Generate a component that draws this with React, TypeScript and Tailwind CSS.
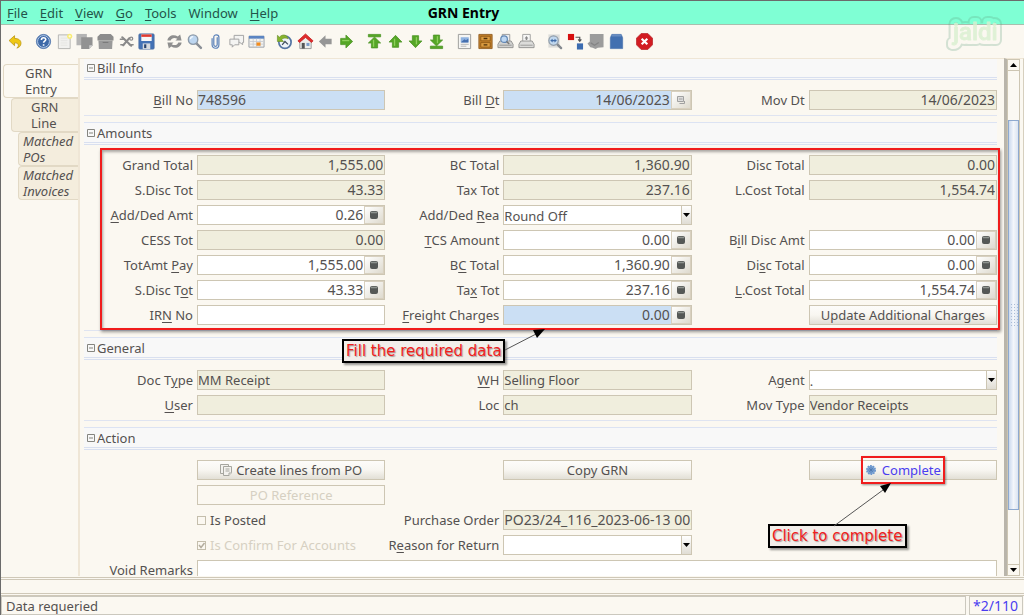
import { useId, useState } from 'react';
import type { ReactNode } from 'react';
import clsx from 'clsx';

const menus = ['&File', '&Edit', '&View', '&Go', '&Tools', 'Window', '&Help'];

const tabs = [
  { lines: ['GRN', 'Entry'], className: 'ml-[2px] pl-[21px] bg-[#fcf9f2]' },
  { lines: ['GRN', 'Line'], className: 'ml-[10px] pl-[19px] bg-[#f4eddd]' },
  { lines: ['Matched', 'POs'], className: 'ml-[17px] pl-1 bg-[#f4eddd] italic' },
  {
    lines: ['Matched', 'Invoices'],
    className: 'ml-[17px] pl-1 bg-[#f4eddd] italic',
  },
];

// Green navigation arrow, optionally with the "first / last" bar
function GreenArrow({ rotate = 0, bar = false }: { rotate?: number; bar?: boolean }) {
  return (
    <g
      transform={`rotate(${rotate} 9 9)`}
      fill="#55a626"
      stroke="#4d9426"
      strokeWidth="0.8"
      strokeLinejoin="round">
      {bar && <path d="M2.5 1.5h13v2.6h-13z" />}
      <path
        d={
          bar
            ? 'M9 4.3 15.5 10.6h-3.2v5.2H5.7v-5.2H2.5z'
            : 'M9 2.5 15.8 9.6h-3.5v5.6H5.7V9.6H2.2z'
        }
      />
      <path
        d={bar ? 'M8 7.2v7.4' : 'M8 6v7.6'}
        stroke="#8ed05c"
        strokeWidth="1.4"
      />
    </g>
  );
}

function Magnifier() {
  return (
    <>
      <path d="m11 11 4.8 4.8" stroke="#8a8f96" strokeWidth="2.6" strokeLinecap="round" />
      <circle cx="7.5" cy="7" r="5" fill="#bdd6f0" stroke="#8d9aa8" strokeWidth="1.5" />
      <path d="M4.6 6.5a3 3 0 0 1 3-2.6" stroke="#f3f9ff" strokeWidth="1.4" fill="none" />
    </>
  );
}

const toolGroups: { width: string; tools: { name: string; icon: ReactNode }[] }[] = [
  {
    width: 'w-[21px]',
    tools: [
      {
        name: 'Undo',
        icon: (
          <path
            d="M2.2 8 8 2.8v3c4.6 0 7 2.2 6.8 5.4-.2 2.6-2 4.2-4.4 4.8 1.3-1.2 1.9-2.3 1.5-3.6-.4-1.4-1.7-2-3.9-2v3z"
            fill="#efc814"
            stroke="#b8940c"
            strokeWidth="0.8"
            strokeLinejoin="round"
          />
        ),
      },
    ],
  },
  {
    width: 'w-[124px]',
    tools: [
      {
        name: 'Help',
        icon: (
          <>
            <circle cx="9" cy="9" r="7.5" fill="#3d69a8" stroke="#5a7db0" />
            <circle cx="9" cy="9" r="6.3" fill="none" stroke="#b9cde8" strokeWidth="1" />
            <path
              d="M6.8 7.3c0-3 4.6-2.9 4.6-.3 0 1.5-2.3 1.6-2.3 3.3M9.1 12v1.5"
              fill="none"
              stroke="#fff"
              strokeWidth="1.7"
            />
          </>
        ),
      },
      {
        name: 'New record',
        icon: (
          <>
            <path d="M2.5 2H15v14.5H2.5z" fill="#f1f1ef" stroke="#b5b5b2" />
            <path d="M5 5.5h7M5 8h7M5 10.5h7M5 13h7" stroke="#e6e5e2" />
            <circle cx="14.5" cy="3.5" r="2.7" fill="#f8ec74" />
            <circle cx="14.5" cy="3.5" r="1.2" fill="#fffce0" />
          </>
        ),
      },
      {
        name: 'Copy record',
        icon: (
          <>
            <path d="M.5 1h11v12H.5z" fill="#b4b4b4" />
            <path d="M5.5 4.5h12V13L14 17H5.5z" fill="#929292" />
            <path d="M14 17v-4h3.5z" fill="#cfcfcf" />
          </>
        ),
      },
      {
        name: 'Delete record',
        icon: (
          <>
            <path d="M3.5 1h11l3 3v4H.5V4z" fill="#8c8c8c" />
            <path d="M1.5 8h15l-.5 9H2z" fill="#9a9a9a" />
            <path d="M6 10h6" stroke="#777" />
          </>
        ),
      },
      {
        name: 'Delete selection',
        icon: (
          <g stroke="#8a8a8a" fill="none" strokeLinecap="round">
            <path d="m4.500 4.500 9.500 9M12 5.500 5.500 13" strokeWidth="2.2" />
            <circle cx="14" cy="6" r="1.6" strokeWidth="1.3" />
            <path d="M2.5 6.500h4.500M12 12.500h4M3 12.500h3" strokeWidth="1.6" />
          </g>
        ),
      },
      {
        name: 'Save',
        icon: (
          <>
            <rect x="1" y="1" width="16" height="16" rx="1" fill="#4372b5" stroke="#4a6fa5" />
            <path d="M3.5 1.500h11v7h-11z" fill="#f6f6f6" />
            <path d="M3.5 1.500h11v2.600h-11z" fill="#e23a2e" />
            <path d="M5 11h8v6H5z" fill="#d5d9de" />
            <path d="M6.5 12h2.300v4H6.500z" fill="#26436f" />
          </>
        ),
      },
    ],
  },
  {
    width: 'w-[103px]',
    tools: [
      {
        name: 'Refresh',
        icon: (
          <g fill="#8f8f8f">
            <path d="M1.5 8C2 3 8 .8 12.5 3.8L15 1.5 16.5 8H10l2-1.8C9 4.2 5.7 5.4 5 8z" />
            <path d="M16.5 10c-.5 5-6.5 7.2-11 4.2L3 16.5 1.5 10H8l-2 1.8c3 2 6.3.8 7-1.8z" />
          </g>
        ),
      },
      { name: 'Find', icon: <Magnifier /> },
      {
        name: 'Attachment',
        icon: (
          <path
            d="M10.8 5v7.2c0 2.6-3.6 2.6-3.6 0V4.2c0-3 5.4-3 5.4.2v8c0 5-7.2 5-7.2 0V6"
            fill="none"
            stroke="#5c83ba"
            strokeWidth="1.3"
            strokeLinecap="round"
          />
        ),
      },
      {
        name: 'Chat',
        icon: (
          <g fill="#f4f4f2" stroke="#a0a0a0" strokeLinejoin="round">
            <path d="M6.5 2.500h10v7.500h-1v2.300L12.500 10h-6z" />
            <path d="M2 6.500h9.500v6H7L4.500 15v-2.500H2z" />
          </g>
        ),
      },
      {
        name: 'Grid toggle',
        icon: (
          <>
            <path d="M1 3.500h16v11.500H1z" fill="#f3f3f0" stroke="#9a9fa8" />
            <path d="M1 3h16v3H1z" fill="#5b85c2" />
            <path d="M2 9h14M2 11.800h14M5.500 6v8.500M9 6v8.500M12.800 6v8.500" stroke="#c3c6cc" strokeWidth="0.8" />
            <path d="M9 10h4.200v3.500H9z" fill="#f28c1e" />
          </>
        ),
      },
    ],
  },
  {
    width: 'w-[83px]',
    tools: [
      {
        name: 'History',
        icon: (
          <>
            <circle cx="9.500" cy="9.800" r="6.500" fill="#eef3f8" stroke="#5575a3" strokeWidth="1.8" />
            <path d="m6.500 12.500 3-3.500 3.200 3" fill="none" stroke="#3f4d5e" strokeWidth="1.3" />
            <path d="M1.500 2.500v6.500h6.500L5.900 6.800c2-1.700 4.600-2 7-.6C12 2 7 .5 3.700 4.400z" fill="#87b52c" stroke="#6a8f2a" strokeWidth="0.7" />
          </>
        ),
      },
      {
        name: 'Home',
        icon: (
          <>
            <path d="M3 8.500 9 4l6 4.500v8H3z" fill="#eeeeec" stroke="#999" />
            <path d="M5 10.500h3.200v6H5z" fill="#555" />
            <path d="M10 10.500h3.200v3.200H10z" fill="#7b9cc9" />
            <path d="M9 1 1 8.300l1.600 1.700L9 4.700l6.400 5.300L17 8.300z" fill="#e22b2b" stroke="#c42a2a" strokeWidth="0.9" />
          </>
        ),
      },
      {
        name: 'Parent record',
        icon: <path d="m2 9 7-6.500v3.600h6.500v5.800H9v3.600z" fill="#969696" />,
      },
      { name: 'Detail record', icon: <GreenArrow rotate={90} /> },
    ],
  },
  {
    width: 'w-[83px]',
    tools: [
      { name: 'First record', icon: <GreenArrow bar /> },
      { name: 'Previous record', icon: <GreenArrow /> },
      { name: 'Next record', icon: <GreenArrow rotate={180} /> },
      { name: 'Last record', icon: <GreenArrow rotate={180} bar /> },
    ],
  },
  {
    width: 'w-[83px]',
    tools: [
      {
        name: 'Report',
        icon: (
          <>
            <path d="M2.500 1.500h13v15h-13z" fill="#f5f5f3" stroke="#9b9b99" />
            <path d="M5 4.500h8.500V10H5z" fill="#8eb2e0" />
            <path d="M5.500 9.500 9 6.500l1.500 1.200 2.500-1.500v3.800H5.500z" fill="#456fae" />
            <path d="M5 12h8.500M5 14h6" stroke="#b5b5b5" />
          </>
        ),
      },
      {
        name: 'Archive',
        icon: (
          <>
            <path d="M2 1.500h14v15H2z" fill="#c17f28" stroke="#96642a" />
            <path d="M4 3.500h10v4.800H4zM4 10.200h10V15H4z" fill="#db9c40" stroke="#885313" strokeWidth="0.8" />
            <path d="M7 5.800h4M7 12.500h4" stroke="#4d2f08" strokeWidth="1.4" />
          </>
        ),
      },
      {
        name: 'Print preview',
        icon: (
          <>
            <path d="M5.500 1.500h8v7.500h-8z" fill="#eceef2" stroke="#9b9b99" />
            <path d="M3 8.500h12l2 3.500v3.500H1V12z" fill="#d2d2d0" stroke="#949492" />
            <path d="M2.500 13h13" stroke="#a9a9a7" strokeWidth="1.5" />
            <circle cx="7.500" cy="6.500" r="3.500" fill="#bfd8f3" stroke="#6489b5" strokeWidth="1.3" />
            <path d="m10 9 3 2.500" stroke="#777" strokeWidth="1.5" />
          </>
        ),
      },
      {
        name: 'Print',
        icon: (
          <>
            <path d="M5 1.500h8v8H5z" fill="#f7f7f6" stroke="#a0a09e" />
            <path d="m9 3.300 2 2.500H9.800V7.500H8.200V5.800H7z" fill="#888" />
            <path d="M3 8.500h12l2 3.500v3.500H1V12z" fill="#dcdcda" stroke="#949492" />
            <path d="M2.500 13h13" stroke="#b0b0ae" strokeWidth="1.5" />
          </>
        ),
      },
    ],
  },
  {
    width: 'w-[83px]',
    tools: [
      {
        name: 'Zoom across',
        icon: (
          <>
            <path d="M2.500 1.500h12v14h-12z" fill="#dcdcda" />
            <path d="m11.500 11.500 4.500 4.500" stroke="#84898f" strokeWidth="2.5" strokeLinecap="round" />
            <circle cx="8" cy="8" r="5" fill="#c0d7ee" stroke="#919da9" strokeWidth="1.3" />
            <path d="M4.500 8 7 6v1.300h2V6l2.500 2L9 10V8.700H7V10z" fill="#406ca8" />
          </>
        ),
      },
      {
        name: 'Workflow',
        icon: (
          <>
            <path d="M1 1h6.500v6.500H1z" fill="#d60f0f" />
            <path d="M10.500 11H17v6.500h-6.500z" fill="#3c6cb0" />
            <path d="M9 4.500h4.500v3.500M11.800 6.800l1.700 2 1.700-2" fill="none" stroke="#555" strokeWidth="1.3" />
          </>
        ),
      },
      {
        name: 'Requests',
        icon: (
          <>
            <path d="M3 1h14.500v14l-6 .5L9 17l-3-1.500-2.500-.5L.5 11 3 9z" fill="#9c9c9c" />
            <path d="M4 10.500 8 13l4.500-3" fill="none" stroke="#858585" strokeWidth="1.4" />
          </>
        ),
      },
      {
        name: 'Product info',
        icon: (
          <>
            <path d="M4 1.500h10L15.500 5v11.500h-13V5z" fill="#4270b0" stroke="#4e77b0" strokeWidth="0.8" />
            <path d="M4 3h10" stroke="#7f9fcc" />
          </>
        ),
      },
    ],
  },
  {
    width: 'w-[21px]',
    tools: [
      {
        name: 'Exit',
        icon: (
          <>
            <path d="M5.500.5h7l5 5v7l-5 5h-7l-5-5v-7z" fill="#d21c22" stroke="#b9292d" strokeWidth="0.8" />
            <path d="m6 6 6 6M12 6l-6 6" stroke="#fff" strokeWidth="2.3" />
          </>
        ),
      },
    ],
  },
];

// "&" marks the access key, the letter after it is underlined
function Mnemonic({ text }: { text: string }) {
  const at = text.indexOf('&');
  if (at < 0) return <>{text}</>;
  return (
    <>
      {text.slice(0, at)}
      <u className="underline-offset-2">{text[at + 1]}</u>
      {text.slice(at + 2)}
    </>
  );
}

function FieldLabel({ id, text }: { id: string; text: string }) {
  return (
    <label htmlFor={id} className="pr-1 text-right leading-5 whitespace-nowrap">
      <Mnemonic text={text} />
    </label>
  );
}

type FieldProps = {
  label: string;
  value?: string;
  tone?: 'locked' | 'editable' | 'required';
  align?: 'left' | 'right';
  tool?: 'calculator' | 'calendar';
  className?: string;
  children?: ReactNode;
};

const tones = {
  locked: 'bg-[#f0eedd]',
  editable: 'bg-white',
  required: 'bg-[#cbdff4]',
};

function Field({
  label,
  value = '',
  tone = 'locked',
  align = 'left',
  tool,
  className,
  children,
}: FieldProps) {
  const id = useId();
  return (
    <>
      <FieldLabel id={id} text={label} />
      <div
        className={clsx(
          'relative flex h-5 min-w-0 border border-[#cdc6b3]',
          tones[tone],
          className,
        )}>
        <input
          id={id}
          defaultValue={value}
          readOnly={tone === 'locked'}
          className={clsx(
            'w-full min-w-0 flex-1 outline-none',
            align === 'right' && 'pr-px text-right',
            /\d/.test(value) && 'text-sm',
          )}
        />
        {tool && (
          <button
            aria-label={`Open ${tool}`}
            className="flex w-5 shrink-0 items-center justify-center border border-[#d8d0bf] bg-linear-to-br from-white to-[#dedace]">
            <svg viewBox="0 0 10 10" className="size-2.5">
              {tool === 'calculator' ? (
                <>
                  <rect x="1" y="1" width="8" height="8" rx="2" fill="#555856" />
                  <path d="M2 2.500h6" stroke="#8f9490" strokeWidth="1.5" />
                </>
              ) : (
                <>
                  <path d="M1.500 1.500h6v5h-6z" fill="#ddd" stroke="#a0a0a0" />
                  <path d="M3 4h3.500M3.500 8.500h5V6" fill="none" stroke="#a0a0a0" />
                </>
              )}
            </svg>
          </button>
        )}
        {children}
      </div>
    </>
  );
}

function Dropdown({ label, value }: { label: string; value: string }) {
  const id = useId();
  return (
    <>
      <FieldLabel id={id} text={label} />
      <div className="relative flex h-5 min-w-0 border border-[#cdc6b3] bg-white">
        <select
          id={id}
          defaultValue={value}
          className="w-full min-w-0 appearance-none outline-none">
          <option>{value}</option>
        </select>
        <span className="pointer-events-none flex w-2.5 shrink-0 items-center justify-center border-l border-[#cdc6b3] bg-linear-to-b from-white to-[#e0ddd4]">
          <svg viewBox="0 0 7 4" className="h-1 w-[7px] shrink-0">
            <path d="M0 0h7L3.500 4z" fill="#000" />
          </svg>
        </span>
      </div>
    </>
  );
}

function ActionButton({
  children,
  disabled,
  className,
}: {
  children: ReactNode;
  disabled?: boolean;
  className?: string;
}) {
  return (
    <button
      disabled={disabled}
      className={clsx(
        'flex h-5 w-full items-center justify-center gap-1 border border-[#cdc6b3] whitespace-nowrap',
        disabled
          ? 'text-[#d6d0c2]'
          : 'bg-linear-to-b from-[#fdfcfa] via-[#f8f6f1] to-[#e2dfd6]',
        className,
      )}>
      {children}
    </button>
  );
}

function Check({
  label,
  checked = false,
  disabled = false,
}: {
  label: string;
  checked?: boolean;
  disabled?: boolean;
}) {
  return (
    <label
      className={clsx(
        'flex h-5 items-center gap-1 whitespace-nowrap',
        disabled && 'text-[#d6d0c2]',
      )}>
      <span className="relative flex">
        <input
          type="checkbox"
          defaultChecked={checked}
          disabled={disabled}
          className="peer size-[9px] appearance-none border border-[#c4beac]"
        />
        <svg
          viewBox="0 0 9 9"
          className="pointer-events-none absolute inset-0 hidden size-[9px] peer-checked:block">
          <path d="m2 4 2 2.500L7.500 2" fill="none" stroke="#b3ad9e" strokeWidth="1.5" />
        </svg>
      </span>
      {label}
    </label>
  );
}

function Section({
  title,
  first,
  children,
}: {
  title: string;
  first?: boolean;
  children: ReactNode;
}) {
  const [open, setOpen] = useState(true);
  return (
    <section className="mb-1.5 border-b border-[#dfe4f1]">
      <h2
        className={clsx(
          'border-b-3 border-double border-b-[#d9e0f0] bg-[#f8f8f8]',
          first ? 'h-[21px]' : 'h-[23px] border-t border-t-[#dce3f3]',
        )}>
        <button
          onClick={() => setOpen(!open)}
          className="flex h-full items-center gap-[2px] pl-[3px]">
          <svg viewBox="0 0 8 8" className="size-2">
            <path
              d={open ? 'M.5.5h7v7h-7zM2 4h4' : 'M.5.5h7v7h-7zM2 4h4M4 2v4'}
              fill="none"
              stroke="#85857f"
            />
          </svg>
          {title}
        </button>
      </h2>
      {open && (
        <div className="relative grid grid-cols-[113px_1fr_118px_1fr_117px_1fr] gap-y-[5px] pt-2.5 pb-[5px]">
          {children}
        </div>
      )}
    </section>
  );
}

function Callout({ children, className }: { children: ReactNode; className: string }) {
  return (
    <div
      className={clsx(
        "absolute z-10 flex h-6 items-center justify-center border-2 border-black bg-[#f2eeea] [font-family:'DejaVu_Sans',sans-serif] text-[15px] whitespace-nowrap text-[#f0201c] shadow-[2px_2px_2px_#0006] text-shadow-[1px_1px_1px_#0005]",
        className,
      )}>
      {children}
    </div>
  );
}

function Logo() {
  const text = {
    x: 7,
    y: 26,
    fontFamily: 'Roboto, sans-serif',
    fontSize: 24,
    fontWeight: 500,
    strokeLinejoin: 'round' as const,
  };
  return (
    <svg
      viewBox="0 0 60 40"
      role="img"
      aria-label="jaldi"
      className="pointer-events-none absolute top-[13px] right-[18px] z-20 h-10 w-[60px]">
      <mask id="logo-ring">
        <text {...text} fill="#fff" stroke="#fff" strokeWidth="12">
          jaldi
        </text>
        <text {...text} fill="#000" stroke="#000" strokeWidth="8">
          jaldi
        </text>
      </mask>
      <path d="M0 0h60v40H0z" fill="#5f9f7c" opacity="0.25" mask="url(#logo-ring)" />
      <text {...text} fill="#d9f0d0" stroke="#d9f0d0" strokeWidth="0.8" opacity="0.8">
        jaldi
      </text>
    </svg>
  );
}

export default function App() {
  return (
    <div className="relative flex h-screen flex-col overflow-hidden border-t border-l border-[#6b6b6b] bg-[#fbf8f1] [font-family:'Noto_Sans',sans-serif] text-[13px] leading-5 text-[#545150]">
      <Logo />

      {/* Menu bar */}
      <header className="relative flex h-6 shrink-0 items-center border-b border-[#a9bfae] bg-[#7fffd4] pl-1.5">
        <nav className="flex gap-3 text-[#24544a]">
          {menus.map((menu) => (
            <button key={menu}>
              <Mnemonic text={menu} />
            </button>
          ))}
        </nav>
        <h1 className="pointer-events-none absolute inset-x-0 pr-[98px] text-center text-sm font-bold text-black">
          GRN Entry
        </h1>
      </header>

      {/* Toolbar */}
      <div className="flex h-[33px] shrink-0 items-center gap-[7px] pl-1">
        {toolGroups.map((group, index) => (
          <div key={index} className={clsx('flex', group.width)}>
            {group.tools.map((tool) => (
              <button
                key={tool.name}
                aria-label={tool.name}
                className="flex flex-1 items-center justify-center">
                <svg viewBox="0 0 18 18" fill="none" className="size-[17px] shrink-0">
                  {tool.icon}
                </svg>
              </button>
            ))}
          </div>
        ))}
      </div>

      <div className="flex min-h-0 flex-1">
        {/* Tabs */}
        <div className="flex w-[77px] shrink-0 flex-col pt-1.5">
          {tabs.map((tab) => (
            <button
              key={tab.lines.join(' ')}
              className={clsx(
                'flex flex-col rounded-l-sm border border-r-0 border-[#e2d9c5] text-left leading-4',
                tab.className,
              )}>
              {tab.lines.map((line) => (
                <span key={line} className="h-4">
                  {line}
                </span>
              ))}
            </button>
          ))}
        </div>

        {/* Form */}
        <main className="min-w-0 flex-1 overflow-hidden border-t border-l-2 border-[#efe6d6] pr-[7px] pl-1">
          <Section title="Bill Info" first>
            <Field label="&Bill No" value="748596" tone="required" />
            <Field label="Bill &Dt" value="14/06/2023" tone="required" align="right" tool="calendar" />
            <Field label="Mov Dt" value="14/06/2023" align="right" />
          </Section>

          <Section title="Amounts">
            <div className="pointer-events-none absolute top-[3px] right-[-3px] bottom-0 left-4 z-10 border-2 border-[#f01c1c] shadow-[1px_2px_3px_#0006,inset_1px_2px_3px_#0005]" />
            <Field label="Grand Total" value="1,555.00" align="right" />
            <Field label="BC Total" value="1,360.90" align="right" />
            <Field label="Disc Total" value="0.00" align="right" />

            <Field label="S.Disc Tot" value="43.33" align="right" />
            <Field label="Tax Tot" value="237.16" align="right" />
            <Field label="L.Cost Total" value="1,554.74" align="right" />

            <Field label="&Add/Ded Amt" value="0.26" tone="editable" align="right" tool="calculator" />
            <Dropdown label="Add/Ded &Rea" value="Round Off" />
            <span className="col-span-2" />

            <Field label="CESS Tot" value="0.00" align="right" />
            <Field label="&TCS Amount" value="0.00" tone="editable" align="right" tool="calculator" />
            <Field label="B&ill Disc Amt" value="0.00" tone="editable" align="right" tool="calculator" />

            <Field label="TotAmt &Pay" value="1,555.00" tone="editable" align="right" tool="calculator" />
            <Field label="B&C Total" value="1,360.90" tone="editable" align="right" tool="calculator" />
            <Field label="Di&sc Total" value="0.00" tone="editable" align="right" tool="calculator" />

            <Field label="S.Disc T&ot" value="43.33" tone="editable" align="right" tool="calculator" />
            <Field label="Ta&x Tot" value="237.16" tone="editable" align="right" tool="calculator" />
            <Field label="&L.Cost Total" value="1,554.74" tone="editable" align="right" tool="calculator" />

            <Field label="IR&N No" tone="editable" />
            <Field label="&Freight Charges" value="0.00" tone="required" align="right" tool="calculator">
              <Callout className="top-[33px] -left-[162px] w-[163px]">
                Fill the required data
              </Callout>
              <svg
                viewBox="0 0 44 24"
                className="pointer-events-none absolute top-[22px] left-0 z-20 h-6 w-11">
                <path d="M1 22 34 5" stroke="#555" />
                <path d="m41 1-8 9-4-8z" fill="#000" />
              </svg>
            </Field>
            <span />
            <ActionButton>Update Additional Charges</ActionButton>
          </Section>

          <Section title="General">
            <Field label="Doc T&ype" value="MM Receipt" />
            <Field label="&WH" value="Selling Floor" />
            <Dropdown label="A&gent" value="." />
            <Field label="&User" />
            <Field label="Loc" value="ch" />
            <Field label="Mov Type" value="Vendor Receipts" />
          </Section>

          <Section title="Action">
            <span />
            <ActionButton>
              <svg viewBox="0 0 12 12" fill="#f3f2ee" stroke="#a6a69f" className="size-3 shrink-0">
                <path d="M.5.5h8v9h-8z" />
                <path d="M3.500 2.500h8v6l-2.500 3H3.500z" />
                <path d="M5.500 5h4M5.500 7h4M9 11.500V9h2.500" />
              </svg>
              Create lines from PO
            </ActionButton>
            <span />
            <ActionButton>Copy GRN</ActionButton>
            <span />
            <div className="relative flex justify-center">
              <ActionButton className="text-[#4a3df0]">
                <svg viewBox="0 0 12 12" className="mr-px size-3 shrink-0">
                  <circle cx="6" cy="6" r="4" fill="#7ba3d4" stroke="#6a95cc" strokeWidth="2" strokeDasharray="1.6 .9" />
                  <circle cx="6" cy="6" r="3.5" fill="#7ba3d4" />
                  <path d="M6 3v6M3 6h6M4 4l4 4M8 4 4 8" stroke="#4470a8" strokeWidth="0.6" />
                </svg>
                Complete
              </ActionButton>
              <div className="pointer-events-none absolute -top-1 h-7 w-[84px] border-2 border-[#f01c1c] shadow-[1px_1px_2px_#0006]" />
              <svg
                viewBox="0 0 64 46"
                className="pointer-events-none absolute top-[22px] left-6 z-20 h-[46px] w-16">
                <path d="M1 44 50 8" stroke="#555" />
                <path d="m58 1-6 10-5-7z" fill="#000" />
              </svg>
              <Callout className="top-16 -left-[41px] w-[139px]">
                Click to complete
              </Callout>
            </div>

            <span />
            <ActionButton disabled>PO Reference</ActionButton>
            <span className="col-span-4" />

            <span />
            <Check label="Is Posted" />
            <Field label="Purchase Order" value="PO23/24_116_2023-06-13 00:00:00" />
            <span className="col-span-2" />

            <span />
            <Check label="Is Confirm For Accounts" checked disabled />
            <Dropdown label="R&eason for Return" value="" />
            <span className="col-span-2" />

            <Field label="Void Remarks" tone="editable" className="col-span-5" />
          </Section>
        </main>

        {/* Scrollbar */}
        <div className="flex w-5 shrink-0 flex-col border-t border-r border-l-3 border-t-[#efe6d6] border-r-[#d6cfbe] border-l-[#b9b5ab] pr-[3px]">
          <button
            aria-label="Scroll up"
            className="flex h-3 items-center justify-center border border-[#cdc6b3] bg-[#fbf8f1]">
            <svg viewBox="0 0 7 4" className="h-1 w-[7px]">
              <path d="M0 4h7L3.500 0z" fill="#000" />
            </svg>
          </button>
          <div className="flex flex-1 flex-col border-x border-[#cdc6b3] bg-[#fbf9f3]">
            <div className="flex-10" />
            <div className="flex flex-79 items-center justify-center border border-[#8ea9cf] bg-linear-to-r from-[#cbd9ee] via-[#f3f6fb] to-[#dbe4f1]">
              <div className="h-6 w-2 bg-[radial-gradient(#a9bbd6_1px,transparent_1px)] bg-size-[3px_3px]" />
            </div>
            <div className="flex-11" />
          </div>
          <button
            aria-label="Scroll down"
            className="flex h-3 items-center justify-center border border-[#cdc6b3] bg-[#fbf8f1]">
            <svg viewBox="0 0 7 4" className="h-1 w-[7px]">
              <path d="M0 0h7L3.500 4z" fill="#000" />
            </svg>
          </button>
        </div>
      </div>

      {/* Status bar */}
      <div className="mt-px h-[19px] shrink-0 border-y-3 border-double border-[#cfc8b8]" />
      <footer className="flex h-[19px] shrink-0 gap-[3px] pr-px">
        <div className="flex flex-1 items-center border border-[#cbc8be] pl-1">
          Data requeried
        </div>
        <div className="flex w-[54px] items-center justify-end border border-[#cbc8be] pr-1 text-sm text-[#4a3df0]">
          *2/110
        </div>
      </footer>
    </div>
  );
}
